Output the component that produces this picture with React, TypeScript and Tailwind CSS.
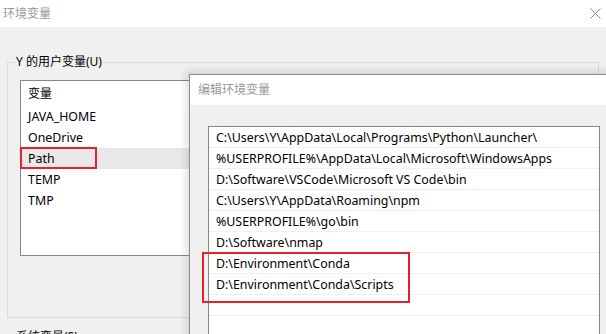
const userVars = ['JAVA_HOME', 'OneDrive', 'Path', 'TEMP', 'TMP'];

const paths = [
  'C:\\Users\\Y\\AppData\\Local\\Programs\\Python\\Launcher\\',
  '%USERPROFILE%\\AppData\\Local\\Microsoft\\WindowsApps',
  'D:\\Software\\VSCode\\Microsoft VS Code\\bin',
  'C:\\Users\\Y\\AppData\\Roaming\\npm',
  '%USERPROFILE%\\go\\bin',
  'D:\\Software\\nmap',
  'D:\\Environment\\Conda',
  'D:\\Environment\\Conda\\Scripts',
  '',
  '',
];

function CloseIcon() {
  return (
    <svg width="11" height="11" viewBox="0 0 11 11" className="text-[#8a8a8a]">
      <path d="M0.5 0.5 L10.5 10.5 M10.5 0.5 L0.5 10.5" stroke="currentColor" strokeWidth="1" fill="none" />
    </svg>
  );
}

export default function App() {
  return (
    <div
      className="relative w-[606px] h-[334px] overflow-hidden bg-[#f0f0f0] text-[12px] leading-[16px] text-black"
      style={{ fontFamily: '"Noto Sans", "Noto Sans CJK SC", sans-serif' }}
    >
      {/* main window title */}
      <div className="h-[27px] bg-white flex items-center justify-between pl-[3px] pr-[5px]">
        <span className="text-[#999999]">环境变量</span>
        <CloseIcon />
      </div>

      {/* user variables group */}
      <div className="pl-[7px] pr-[7px] pt-[27px]">
        <fieldset className="h-[264px] border border-[#dcdcdc]">
          <legend className="ml-[7px] px-[1px]">Y 的用户变量(U)</legend>
          <div className="ml-[12px] mt-[10px] w-[460px] h-[176px] border border-[#828790] bg-white text-[12.4px]">
            <div className="h-[25px] flex items-center pl-[7px] text-[12px]">变量</div>
            {userVars.map((v) => (
              <div
                key={v}
                className={`h-[21px] flex items-center pl-[7px] ${v === 'Path' ? 'bg-[#e8e8e8]' : ''}`}
              >
                {v}
              </div>
            ))}
          </div>
        </fieldset>
        <div className="pl-[9px] pt-[11px]">系统变量(S)</div>
      </div>

      {/* edit dialog */}
      <div className="absolute left-[189px] top-[74px] right-[-20px] h-[300px] border-l border-t border-[#8c8c8c] bg-[#f0f0f0] shadow-[-3px_-3px_8px_rgba(0,0,0,0.12)]">
        <div className="h-[30px] bg-white flex items-center pl-[8px]">
          <span className="text-[#999999]">编辑环境变量</span>
        </div>
        <div className="pl-[18px] pr-[26px] pt-[21px]">
          <div className="h-[260px] border border-[#828790] bg-white text-[12.4px]">
            {paths.map((p, i) => (
              <div key={i} className="h-[21px] flex items-center pl-[7px] pt-[1px] border-b border-[#f0f0f0]">
                {p}
              </div>
            ))}
          </div>
        </div>
      </div>

      {/* annotations */}
      <div className="absolute left-[20px] top-[147px] w-[77px] h-[22px] border-2 border-[#e8202a]" />
      <div className="absolute left-[202px] top-[252px] w-[208px] h-[51px] border-2 border-[#e8202a]" />
    </div>
  );
}
